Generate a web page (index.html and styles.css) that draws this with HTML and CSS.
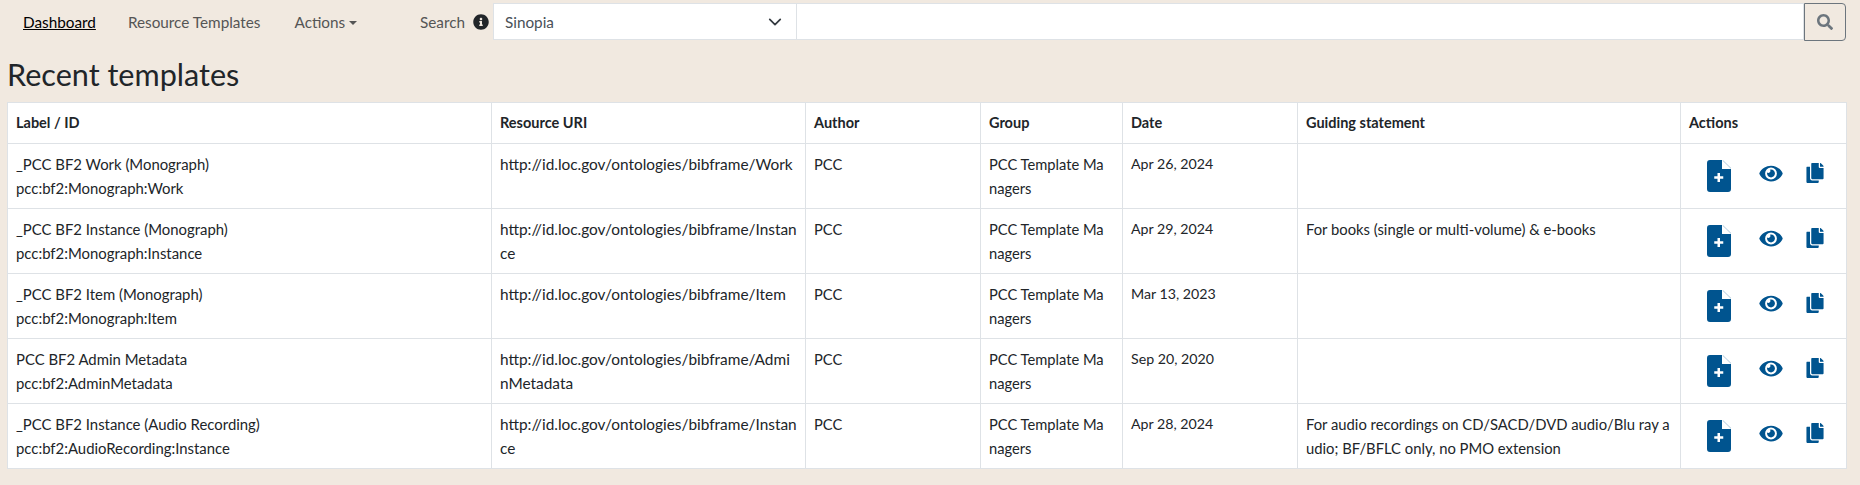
FILE: index.html
```html
<!DOCTYPE html>
<html>
<head>
<meta charset="utf-8">
<title>Sinopia dashboard</title>
<link rel="stylesheet" href="styles.css">
</head>
<body>
<nav class="topnav">
  <ul class="navlinks">
    <li><a class="navlink active" href="#">Dashboard</a></li>
    <li><a class="navlink" href="#">Resource Templates</a></li>
    <li><a class="navlink" href="#">Actions<span class="caret"></span></a></li>
  </ul>
  <form class="searchform">
    <label class="searchlabel">Search</label>
    <svg class="infoicon" viewBox="0 0 512 512"><path d="M256 8C119.043 8 8 119.083 8 256c0 136.997 111.043 248 248 248s248-111.003 248-248C504 119.083 392.957 8 256 8zm0 110c23.196 0 42 18.804 42 42s-18.804 42-42 42-42-18.804-42-42 18.804-42 42-42zm56 254c0 6.627-5.373 12-12 12h-88c-6.627 0-12-5.373-12-12v-24c0-6.627 5.373-12 12-12h12v-64h-12c-6.627 0-12-5.373-12-12v-24c0-6.627 5.373-12 12-12h64c6.627 0 12 5.373 12 12v100h12c6.627 0 12 5.373 12 12v24z"/></svg>
    <div class="selectbox">Sinopia
      <svg class="chevron" viewBox="0 0 16 16"><path d="M2 5l6 6 6-6" fill="none" stroke="#343a40" stroke-width="2" stroke-linecap="round" stroke-linejoin="round"/></svg>
    </div>
    <div class="searchinput"></div>
    <button class="searchbtn" type="button">
      <svg viewBox="0 0 512 512"><path d="M505 442.7L405.3 343c-4.5-4.5-10.6-7-17-7H372c27.6-35.3 44-79.7 44-128C416 93.1 322.9 0 208 0S0 93.1 0 208s93.1 208 208 208c48.3 0 92.7-16.4 128-44v16.3c0 6.4 2.5 12.5 7 17l99.7 99.7c9.4 9.4 24.6 9.4 33.9 0l28.3-28.3c9.4-9.4 9.4-24.6.1-34zM208 336c-70.7 0-128-57.2-128-128 0-70.7 57.2-128 128-128 70.7 0 128 57.2 128 128 0 70.7-57.2 128-128 128z"/></svg>
    </button>
  </form>
</nav>

<h1 class="pagetitle">Recent templates</h1>

<table class="templates">
  <colgroup>
    <col class="col-label"><col class="col-uri"><col class="col-author"><col class="col-group"><col class="col-date"><col class="col-guide"><col class="col-actions">
  </colgroup>
  <thead>
    <tr><th>Label / ID</th><th>Resource URI</th><th>Author</th><th>Group</th><th>Date</th><th>Guiding statement</th><th>Actions</th></tr>
  </thead>
  <tbody>
    <tr>
      <td class="labelcell">_PCC BF2 Work (Monograph)<br>pcc:bf2:Monograph:Work</td>
      <td class="uricell">http://id.loc.gov/ontologies/bibframe/Work</td>
      <td>PCC</td>
      <td>PCC Template Ma<br>nagers</td>
      <td class="datecell">Apr 26, 2024</td>
      <td class="guidecell"></td>
      <td class="actionscell"><div class="actionicons">
        <svg class="ico-new" viewBox="0 0 384 512"><use href="#i-new"/></svg>
        <svg class="ico-view" viewBox="0 0 576 512"><use href="#i-view"/></svg>
        <svg class="ico-copy" viewBox="0 0 448 512"><use href="#i-copy"/></svg>
      </div></td>
    </tr>
    <tr>
      <td class="labelcell">_PCC BF2 Instance (Monograph)<br>pcc:bf2:Monograph:Instance</td>
      <td class="uricell">http://id.loc.gov/ontologies/bibframe/Instan<br>ce</td>
      <td>PCC</td>
      <td>PCC Template Ma<br>nagers</td>
      <td class="datecell">Apr 29, 2024</td>
      <td class="guidecell">For books (single or multi-volume) &amp; e-books</td>
      <td class="actionscell"><div class="actionicons">
        <svg class="ico-new" viewBox="0 0 384 512"><use href="#i-new"/></svg>
        <svg class="ico-view" viewBox="0 0 576 512"><use href="#i-view"/></svg>
        <svg class="ico-copy" viewBox="0 0 448 512"><use href="#i-copy"/></svg>
      </div></td>
    </tr>
    <tr>
      <td class="labelcell">_PCC BF2 Item (Monograph)<br>pcc:bf2:Monograph:Item</td>
      <td class="uricell">http://id.loc.gov/ontologies/bibframe/Item</td>
      <td>PCC</td>
      <td>PCC Template Ma<br>nagers</td>
      <td class="datecell">Mar 13, 2023</td>
      <td class="guidecell"></td>
      <td class="actionscell"><div class="actionicons">
        <svg class="ico-new" viewBox="0 0 384 512"><use href="#i-new"/></svg>
        <svg class="ico-view" viewBox="0 0 576 512"><use href="#i-view"/></svg>
        <svg class="ico-copy" viewBox="0 0 448 512"><use href="#i-copy"/></svg>
      </div></td>
    </tr>
    <tr>
      <td class="labelcell">PCC BF2 Admin Metadata<br>pcc:bf2:AdminMetadata</td>
      <td class="uricell">http://id.loc.gov/ontologies/bibframe/Admi<br>nMetadata</td>
      <td>PCC</td>
      <td>PCC Template Ma<br>nagers</td>
      <td class="datecell">Sep 20, 2020</td>
      <td class="guidecell"></td>
      <td class="actionscell"><div class="actionicons">
        <svg class="ico-new" viewBox="0 0 384 512"><use href="#i-new"/></svg>
        <svg class="ico-view" viewBox="0 0 576 512"><use href="#i-view"/></svg>
        <svg class="ico-copy" viewBox="0 0 448 512"><use href="#i-copy"/></svg>
      </div></td>
    </tr>
    <tr>
      <td class="labelcell">_PCC BF2 Instance (Audio Recording)<br>pcc:bf2:AudioRecording:Instance</td>
      <td class="uricell">http://id.loc.gov/ontologies/bibframe/Instan<br>ce</td>
      <td>PCC</td>
      <td>PCC Template Ma<br>nagers</td>
      <td class="datecell">Apr 28, 2024</td>
      <td class="guidecell">For audio recordings on CD/SACD/DVD audio/Blu ray a<br>udio; BF/BFLC only, no PMO extension</td>
      <td class="actionscell"><div class="actionicons">
        <svg class="ico-new" viewBox="0 0 384 512"><use href="#i-new"/></svg>
        <svg class="ico-view" viewBox="0 0 576 512"><use href="#i-view"/></svg>
        <svg class="ico-copy" viewBox="0 0 448 512"><use href="#i-copy"/></svg>
      </div></td>
    </tr>
  </tbody>
</table>

<svg class="iconsheet">
  <symbol id="i-new" viewBox="0 0 384 512">
    <path d="M48 0H240V144H384V464a48 48 0 0 1-48 48H48a48 48 0 0 1-48-48V48A48 48 0 0 1 48 0z"/>
    <path d="M250 4L384 134" stroke="#7fa9c7" stroke-width="10" fill="none"/>
    <path d="M168 208h40v52h52v40h-52v52h-40v-52h-52v-40h52z" fill="#fff"/>
  </symbol>
  <symbol id="i-view" viewBox="0 0 576 512">
    <path d="M572.52 241.4C518.29 135.59 410.93 64 288 64S57.68 135.64 3.48 241.41a32.35 32.35 0 0 0 0 29.19C57.71 376.41 165.07 448 288 448s230.32-71.64 284.52-177.41a32.35 32.35 0 0 0 0-29.19zM288 400a144 144 0 1 1 144-144 143.93 143.93 0 0 1-144 144zm0-240a95.31 95.31 0 0 0-25.31 3.79 47.85 47.85 0 0 1-66.9 66.9A95.78 95.78 0 1 0 288 160z"/>
  </symbol>
  <symbol id="i-copy" viewBox="0 0 448 512">
    <path d="M320 448v40c0 13.255-10.745 24-24 24H24c-13.255 0-24-10.745-24-24V120c0-13.255 10.745-24 24-24h72v296c0 30.879 25.121 56 56 56h168zm0-344V0H152c-13.255 0-24 10.745-24 24v368c0 13.255 10.745 24 24 24h272c13.255 0 24-10.745 24-24V128H344c-13.2 0-24-10.8-24-24zm120.971-31.029L375.029 7.029A24 24 0 0 0 358.059 0H352v96h96v-6.059a24 24 0 0 0-7.029-16.97z"/>
  </symbol>
</svg>
</body>
</html>
```

FILE: styles.css
```css
body {
  margin: 0;
  padding: 3px 14px 0 7px;
  background-color: #f1e9e0;
  font-family: "Lato", "Noto Sans", sans-serif;
  font-size: 14.7px;
  line-height: 24px;
  color: #212529;
}

/* top bar */
.topnav {
  display: flex;
  align-items: center;
  height: 37px;
  font-size: 15.3px;
}

.navlinks {
  display: flex;
  margin: 0;
  padding: 0;
  list-style: none;
  width: 405px;
}

.navlink {
  display: block;
  padding: 0 16px;
  color: #555;
  text-decoration: none;
}

.navlink.active {
  color: #000;
  text-decoration: underline;
}

.navlinks li:nth-child(2) .navlink {
  padding-left: 16px;
  padding-right: 18px;
}

.caret {
  display: inline-block;
  margin-left: 4px;
  vertical-align: 3px;
  border-top: 4px solid #555;
  border-left: 4px solid transparent;
  border-right: 4px solid transparent;
}

.searchform {
  display: flex;
  align-items: center;
  flex: 1;
  height: 37px;
}

.searchlabel {
  color: #555;
  margin-left: 8px;
  width: 53px;
}

.infoicon {
  width: 16px;
  height: 16px;
  margin-right: 4px;
  fill: #212529;
}

.selectbox {
  display: flex;
  align-items: center;
  justify-content: space-between;
  box-sizing: border-box;
  width: 304px;
  height: 37px;
  padding: 0 14px 0 11px;
  background: #fff;
  border: 1px solid #dee2e6;
  color: #495057;
}

.chevron {
  width: 14px;
  height: 14px;
}

.searchinput {
  flex: 1;
  height: 37px;
  box-sizing: border-box;
  background: #fff;
  border: 1px solid #dee2e6;
  border-left: 0;
}

.searchbtn {
  display: flex;
  align-items: center;
  justify-content: center;
  box-sizing: border-box;
  width: 42px;
  height: 38px;
  padding: 0;
  background: transparent;
  border: 1px solid #6c757d;
  border-radius: 0 4px 4px 0;
}

.searchbtn svg {
  width: 16px;
  height: 16px;
  fill: #6c757d;
}

/* heading */
.pagetitle {
  margin: 15px 0 7px;
  font-size: 30.6px;
  line-height: 40px;
  font-weight: 400;
  color: #212529;
}

/* table */
.templates {
  width: 1839px;
  table-layout: fixed;
  border-collapse: collapse;
  background: #fff;
}

.col-label { width: 484px; }
.col-uri { width: 314px; }
.col-author { width: 175px; }
.col-group { width: 142px; }
.col-date { width: 175px; }
.col-guide { width: 383px; }
.col-actions { width: 166px; }

.templates th,
.templates td {
  padding: 8px;
  border: 1px solid #dee2e6;
  text-align: left;
  vertical-align: top;
  height: 48px;
}

.templates th {
  height: 24px;
  font-weight: 700;
  font-size: 14.5px;
}

.templates .labelcell {
  font-size: 14.9px;
}

.templates .uricell {
  font-size: 15.4px;
}

.templates .datecell {
  font-size: 14.2px;
}

.templates .guidecell {
  font-size: 14.8px;
  white-space: nowrap;
}

.actionicons {
  display: flex;
  align-items: center;
  height: 48px;
  padding-left: 18px;
}

.actionicons svg {
  fill: #00548f;
  flex: none;
}

.ico-new {
  width: 24px;
  height: 32px;
}

.ico-view {
  width: 24px;
  height: 21px;
  margin-left: 28px;
  margin-top: -5px;
}

.ico-copy {
  width: 18px;
  height: 20px;
  margin-left: 23px;
  margin-top: -6px;
}

.iconsheet {
  display: none;
}
```
